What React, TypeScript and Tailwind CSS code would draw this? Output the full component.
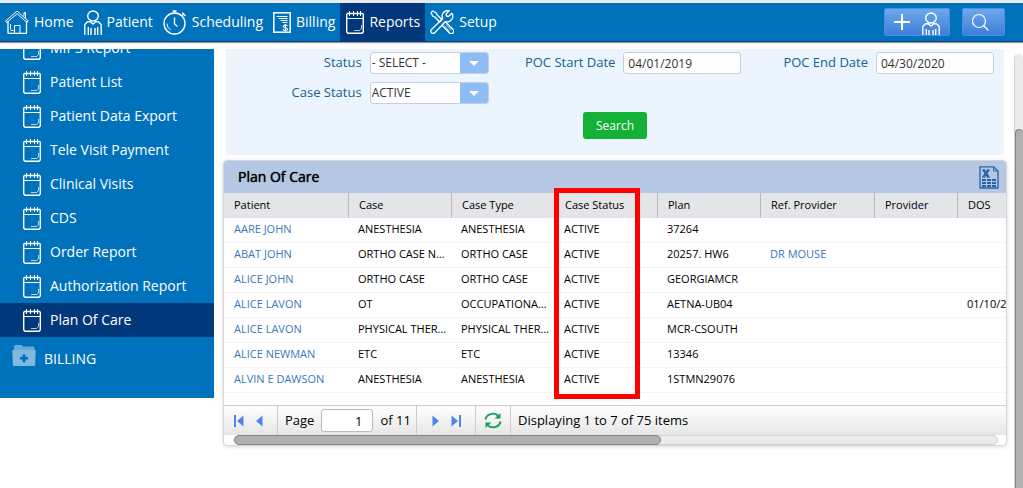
import type { ReactNode } from "react"

interface IconProps {
  className?: string
}

const HomeIcon = () => (
  <svg width="24" height="24" viewBox="0 0 24 24" fill="none" stroke="currentColor" strokeLinejoin="round" strokeLinecap="round">
    <path d="M3 11.500V22.500a1 1 0 0 0 1 1H20.500a1 1 0 0 0 1-1V11.500" strokeWidth="1.300" />
    <path d="M.7 11 12 1l11.300 10-1.500 1.300L12 3.700 2.200 12.300Z" strokeWidth="1" />
    <path d="M19 6V2.500h1.500V7.500M9.500 23v-7.500h5.500V23M5.500 14.500v4.500M6 20.500h2" strokeWidth="1" />
  </svg>
)

const PatientIcon = ({ className }: IconProps) => (
  <svg className={className} width="18" height="25" viewBox="0 0 18 25" fill="none" stroke="currentColor" strokeWidth="1.400" strokeLinejoin="round">
    <ellipse cx="9" cy="6" rx="5.300" ry="5" />
    <path d="M6.500 10.500v1.300H3.500L.8 14.500V25M11.500 10.500v1.300h3l2.700 2.700V25M4.300 17v8M7 25v-7M11 25v-7M13.700 17v8M6.500 12 9 14l2.500-2" />
  </svg>
)

const ClockIcon = () => (
  <svg width="24" height="25" viewBox="0 0 24 25" fill="none" stroke="currentColor" strokeWidth="1.400" strokeLinecap="round">
    <circle cx="11.500" cy="13.500" r="10.500" />
    <path d="M11.500 3V.8M10 1h3M11.500 8v6l2.500 2M19 5.500l1.500-1.500M19.500 3l2.500 2.500" />
    <path d="M4 14a7.500 7.500 0 0 0 3.500 6" strokeWidth="1" />
  </svg>
)

const BillingIcon = () => (
  <svg width="18" height="21" viewBox="0 0 18 21" fill="none" stroke="currentColor">
    <rect x=".8" y=".8" width="16.400" height="19.400" strokeWidth="1.500" />
    <path d="M3.500 4.500h11M5.500 6.500h9M7.500 8.500h7M9.500 10.500h5" strokeWidth="1" />
    <path d="M14.500 14q-.8-1-2.300-1t-2 1.300q0 1.200 2.200 1.500t2.200 1.500q-.3 1.200-2.200 1.200t-2.500-1.200M12.300 12v7.500" strokeWidth="1.100" />
  </svg>
)

const ReportIcon = () => (
  <svg width="18" height="24" viewBox="0 0 18 24" fill="none" stroke="currentColor">
    <path d="M1.500 3.500h15l.8.800V22l-1.300 1.300H2L.7 22V4.300Z" strokeWidth="1.400" />
    <path d="M3.500 1v5M7.500 1v5M11.500 1v5M14.500 1v5" strokeWidth="1" />
    <path d="M1 8.500h16" strokeWidth="1" />
    <path d="M8 20.500h6M14 19.500h1M15.500 15v4" strokeWidth="1" opacity=".7" />
  </svg>
)

const SetupIcon = () => (
  <svg width="24" height="24" viewBox="0 0 24 24" fill="none" stroke="currentColor" strokeWidth="1.300" strokeLinejoin="round">
    <path d="M1 2.700 2.700 1l3.500 1.800.8 2L12 9.800 9.800 12 4.800 7l-2-.8Z" />
    <path d="m14 12.500 2-.3 7 7.300a2.300 2.300 0 0 1-3.500 3.500l-7-7.300.3-2" />
    <path d="M21.800 3.200 18.500 6.500l-2-.5-.5-2L19.300.8a5.500 5.500 0 0 0-6.600 7.700L1.500 19.500a2.200 2.200 0 0 0 3.200 3.200L15.500 11.500a5.500 5.500 0 0 0 6.300-8.300Z" />
    <path d="m16 14.500 5 5.300M14.500 16l5 5.300" strokeWidth=".8" />
  </svg>
)

const SearchIcon = () => (
  <svg className="mr-2" width="18" height="18" viewBox="0 0 18 18" fill="none" stroke="currentColor" strokeWidth="1.200" strokeLinecap="round">
    <circle cx="8" cy="8" r="6.500" />
    <path d="m13 13 4 4" />
  </svg>
)

const PlusIcon = () => (
  <svg width="16" height="16" viewBox="0 0 16 16" stroke="currentColor" strokeWidth="2">
    <path d="M8 0v16M0 8h16" />
  </svg>
)

const FolderIcon = () => (
  <svg width="24" height="21" viewBox="0 0 24 21">
    <path d="M2 5V1.500Q2 0 3.500 0H9q1 0 2 1.500H21q1.500 0 1.500 2V5Z" fill="#67a9d7" />
    <path d="M.3 5h23.400l-.5 14.500q0 1.500-1.500 1.500H2.300Q.8 21 .8 19.500Z" fill="#80b8de" />
    <path d="M12 9.200v8M8 13.200h8" stroke="#0071bb" strokeWidth="2.800" />
  </svg>
)

const ExcelIcon = () => (
  <svg width="20" height="23" viewBox="0 0 20 23" fill="none" stroke="#2663a8">
    <path d="M1 .8h13.500L19 5v17H1Z" strokeWidth="1.300" />
    <path d="M14.500 1v4h4" strokeWidth="1" />
    <path d="m4.500 4 5 7M9.500 4l-5 7" strokeWidth="2.300" />
    <path d="M3 4h3.500M8 4h3M3 11h3M7.500 11H11" strokeWidth="1" />
    <path d="M3 14h14M3 17h14M3 20h14" strokeWidth="2" strokeDasharray="4 1" />
  </svg>
)

const RefreshIcon = () => (
  <svg width="18" height="17" viewBox="0 0 18 17" fill="none" stroke="#12a05c" strokeWidth="1.900">
    <path d="M1.500 7.500A7.500 6.800 0 0 1 14 3.500M16.500 9.500A7.500 6.800 0 0 1 4 13.500" />
    <path d="M16.500 1v5.500h-6ZM1.500 16v-5.500h6Z" fill="#12a05c" stroke="none" />
  </svg>
)

const PrevIcon = ({ edge }: { edge?: boolean }) => (
  <svg width="10" height="12" viewBox="0 0 10 12" fill="#4c84ee">
    <path d="M9.500.5v11L3 6Z" />
    {edge && <path d="M0 0h2v12H0Z" />}
  </svg>
)

const NextIcon = ({ edge }: { edge?: boolean }) => (
  <svg width="10" height="12" viewBox="0 0 10 12" fill="#4c84ee">
    <path d="M.5.5v11L7 6Z" />
    {edge && <path d="M8 0h2v12H8Z" />}
  </svg>
)

const navItems = [
  { label: "Home", icon: <HomeIcon /> },
  { label: "Patient", icon: <PatientIcon /> },
  { label: "Scheduling", icon: <ClockIcon /> },
  { label: "Billing", icon: <BillingIcon /> },
  { label: "Reports", icon: <ReportIcon />, active: true },
  { label: "Setup", icon: <SetupIcon /> },
]

const reports = [
  "MIPS Report",
  "Patient List",
  "Patient Data Export",
  "Tele Visit Payment",
  "Clinical Visits",
  "CDS",
  "Order Report",
  "Authorization Report",
  "Plan Of Care",
]

const columns = ["Patient", "Case", "Case Type", "Case Status", "Plan", "Ref. Provider", "Provider", "DOS"]

const rows = [
  ["AARE JOHN", "ANESTHESIA", "ANESTHESIA", "ACTIVE", "37264", "", "", ""],
  ["ABAT JOHN", "ORTHO CASE NEW", "ORTHO CASE", "ACTIVE", "20257. HW6", "DR MOUSE", "", ""],
  ["ALICE JOHN", "ORTHO CASE", "ORTHO CASE", "ACTIVE", "GEORGIAMCR", "", "", ""],
  ["ALICE LAVON", "OT", "OCCUPATIONAL TX", "ACTIVE", "AETNA-UB04", "", "", "01/10/2020"],
  ["ALICE LAVON", "PHYSICAL THERAPY", "PHYSICAL THERAPY", "ACTIVE", "MCR-CSOUTH", "", "", ""],
  ["ALICE NEWMAN", "ETC", "ETC", "ACTIVE", "13346", "", "", ""],
  ["ALVIN E DAWSON", "ANESTHESIA", "ANESTHESIA", "ACTIVE", "1STMN29076", "", "", ""],
]

function TopBar() {
  return (
    <header className="flex h-[42px] border-t-3 border-b border-t-[#ebebef] border-b-[#0b3c7d] bg-[#0071bb] text-white shadow-[0_1px_1px_#999]">
      <nav className="flex">
        {navItems.map((item) => (
          <a
            key={item.label}
            href="#"
            className={`flex items-center gap-[5px] px-[5px] text-sm ${item.active ? "bg-[#00387b] pl-[6px]" : ""}`}
          >
            {item.icon}
            {item.label}
          </a>
        ))}
      </nav>
      <div className="mr-[18px] ml-auto flex items-center gap-3">
        <button aria-label="Add patient" className="flex h-7 w-[66px] items-center justify-center gap-3 overflow-hidden rounded-xs border border-[#4a8ee0] bg-linear-to-b from-[#6ca8ea] to-[#3f7edb]">
          <PlusIcon />
          <PatientIcon className="mt-1" />
        </button>
        <button aria-label="Search" className="flex h-7 w-[43px] items-center justify-center rounded-xs border border-[#4a8ee0] bg-linear-to-b from-[#6ca8ea] to-[#3f7edb]">
          <SearchIcon />
        </button>
      </div>
    </header>
  )
}

function Sidebar() {
  return (
    <aside className="flex h-[349px] w-[214px] shrink-0 flex-col justify-end overflow-hidden bg-[#0071bb] text-sm text-white">
      {reports.map((name) => (
        <a
          key={name}
          href="#"
          className={`flex h-[34px] shrink-0 items-center gap-[9px] pl-[23px] ${name === "Plan Of Care" ? "bg-[#00387b]" : ""}`}
        >
          <ReportIcon />
          {name}
        </a>
      ))}
      <a href="#" className="flex h-[61px] shrink-0 items-start gap-2 pt-2 pl-3">
        <FolderIcon />
        <span className="pt-1">BILLING</span>
      </a>
    </aside>
  )
}

function Field({ id, label, children }: { id: string; label: string; children: ReactNode }) {
  return (
    <div className="flex items-center justify-end gap-2">
      <label htmlFor={id} className="text-[13px] text-[#175d8d]">{label}</label>
      {children}
    </div>
  )
}

function Select({ id, options }: { id: string; options: string[] }) {
  return (
    <div className="relative">
      <select id={id} className="block h-[22px] w-[119px] appearance-none rounded-[3px] border border-[#c6cfdf] bg-white pl-px text-[#333]">
        {options.map((option) => (
          <option key={option}>{option}</option>
        ))}
      </select>
      <span className="pointer-events-none absolute inset-y-px right-px flex w-7 items-center justify-center rounded-r-xs bg-[#8dbdf4]">
        <svg width="10" height="5" viewBox="0 0 10 5" fill="white">
          <path d="M0 0h10L5 5Z" />
        </svg>
      </span>
    </div>
  )
}

function Filters() {
  const inputClass = "h-[22px] w-[118px] rounded-[3px] border border-[#c6cfdf] bg-white px-1 text-[#333]"

  return (
    <form className="mx-[3px] h-[106px] rounded-b-sm bg-[#ecf5fd] px-[10px] pt-[3px] text-xs">
      <div className="grid auto-rows-[22px] grid-cols-3 gap-y-2">
        <Field id="status" label="Status">
          <Select id="status" options={["- SELECT -"]} />
        </Field>
        <Field id="start" label="POC Start Date">
          <input id="start" defaultValue="04/01/2019" className={inputClass} />
        </Field>
        <Field id="end" label="POC End Date">
          <input id="end" defaultValue="04/30/2020" className={inputClass} />
        </Field>
        <Field id="case-status" label="Case Status">
          <Select id="case-status" options={["ACTIVE"]} />
        </Field>
      </div>
      <button type="button" className="mx-auto mt-2 block h-[27px] w-16 rounded-[3px] bg-[#13b135] text-white">
        Search
      </button>
    </form>
  )
}

function Pager() {
  return (
    <div className="flex h-[30px] items-center border-t border-[#ccc] bg-linear-to-b from-white to-[#e6e6e6] text-[13px] text-black">
      <div className="flex h-full w-[54px] items-center gap-[9px] border-r border-[#ccc] pl-[10px]">
        <button aria-label="First page"><PrevIcon edge /></button>
        <button aria-label="Previous page"><PrevIcon /></button>
      </div>
      <div className="flex h-full w-[139px] items-center gap-[7px] border-r border-[#ccc] pl-[7px]">
        <label htmlFor="page">Page</label>
        <input id="page" defaultValue="1" className="h-[23px] w-[52px] rounded-[3px] border border-[#bbb] bg-white px-[10px] text-right" />
        <span>of 11</span>
      </div>
      <div className="flex h-full w-[59px] items-center gap-[9px] border-r border-[#ccc] pl-[15px]">
        <button aria-label="Next page"><NextIcon /></button>
        <button aria-label="Last page"><NextIcon edge /></button>
      </div>
      <div className="flex h-full w-[35px] items-center justify-center border-r border-[#ccc]">
        <button aria-label="Refresh"><RefreshIcon /></button>
      </div>
      <span className="pl-[7px]">Displaying 1 to 7 of 75 items</span>
    </div>
  )
}

function PlanOfCare() {
  return (
    <section className="relative mt-[5px] rounded-sm border border-[#d6d6d6] bg-white shadow-[0_1px_4px_#ddd]">
      <div className="flex h-8 items-center justify-between rounded-t-[3px] bg-[#b5c7e2] pr-[7px] pl-[14px]">
        <h2 className="text-sm text-black [text-shadow:0_0_1px_#000]">Plan Of Care</h2>
        <button aria-label="Export to Excel"><ExcelIcon /></button>
      </div>
      <div className="h-[212px] overflow-hidden">
        <table className="w-[837px] min-w-full table-fixed border-separate border-spacing-0 text-left text-[11px] text-black">
          <colgroup>
            <col className="w-[124px]" />
            <col className="w-[103px]" />
            <col className="w-[103px]" />
            <col className="w-[103px]" />
            <col className="w-[103px]" />
            <col className="w-[114px]" />
            <col className="w-[83px]" />
            <col className="w-[104px]" />
          </colgroup>
          <thead>
            <tr className="h-[25px] bg-[#e4e5e9]">
              {columns.map((column) => (
                <th key={column} className="border-l border-[#b8b8bc] p-0 pl-[10px] font-normal first:border-l-0">{column}</th>
              ))}
            </tr>
          </thead>
          <tbody>
            {rows.map((row, i) => (
              <tr key={i} className="h-[25px]">
                {row.map((cell, j) => (
                  <td key={j} className="truncate border-b border-[#f4f4f4] pt-0 pr-1 pb-[2px] pl-[10px]">
                    {cell && (j === 0 || j === 5) ? <a href="#" className="text-[#3b78bd]">{cell}</a> : cell}
                  </td>
                ))}
              </tr>
            ))}
          </tbody>
        </table>
      </div>
      <Pager />
      <div className="mr-2 ml-[10px] h-[10px] rounded-full border border-[#d2d2d2] bg-[#ebebeb]">
        <div className="-mt-px -ml-px h-[10px] w-[56%] rounded-full border border-[#858585] bg-[#b0b0b0]" />
      </div>
      {/* Case Status highlight */}
      <div className="pointer-events-none absolute top-[27px] left-[330px] h-[211px] w-[86px] border-5 border-[#fe0000]" />
    </section>
  )
}

export default function App() {
  return (
    <div className="min-h-screen bg-white font-['Open_Sans',sans-serif]">
      <TopBar />
      <div className="flex pt-[7px]">
        <Sidebar />
        <main className="ml-[9px] min-w-0 flex-1">
          <Filters />
          <PlanOfCare />
        </main>
        {/* Page scrollbar */}
        <div className="mt-[5px] ml-[7px] h-[calc(100vh-54px)] w-[9px] overflow-hidden rounded-t-full border-l border-[#d2d2d2] bg-[#ebebeb] pt-[75px]">
          <div className="h-full rounded-t-full border-t border-l border-[#858585] bg-[#b0b0b0]" />
        </div>
      </div>
    </div>
  )
}
